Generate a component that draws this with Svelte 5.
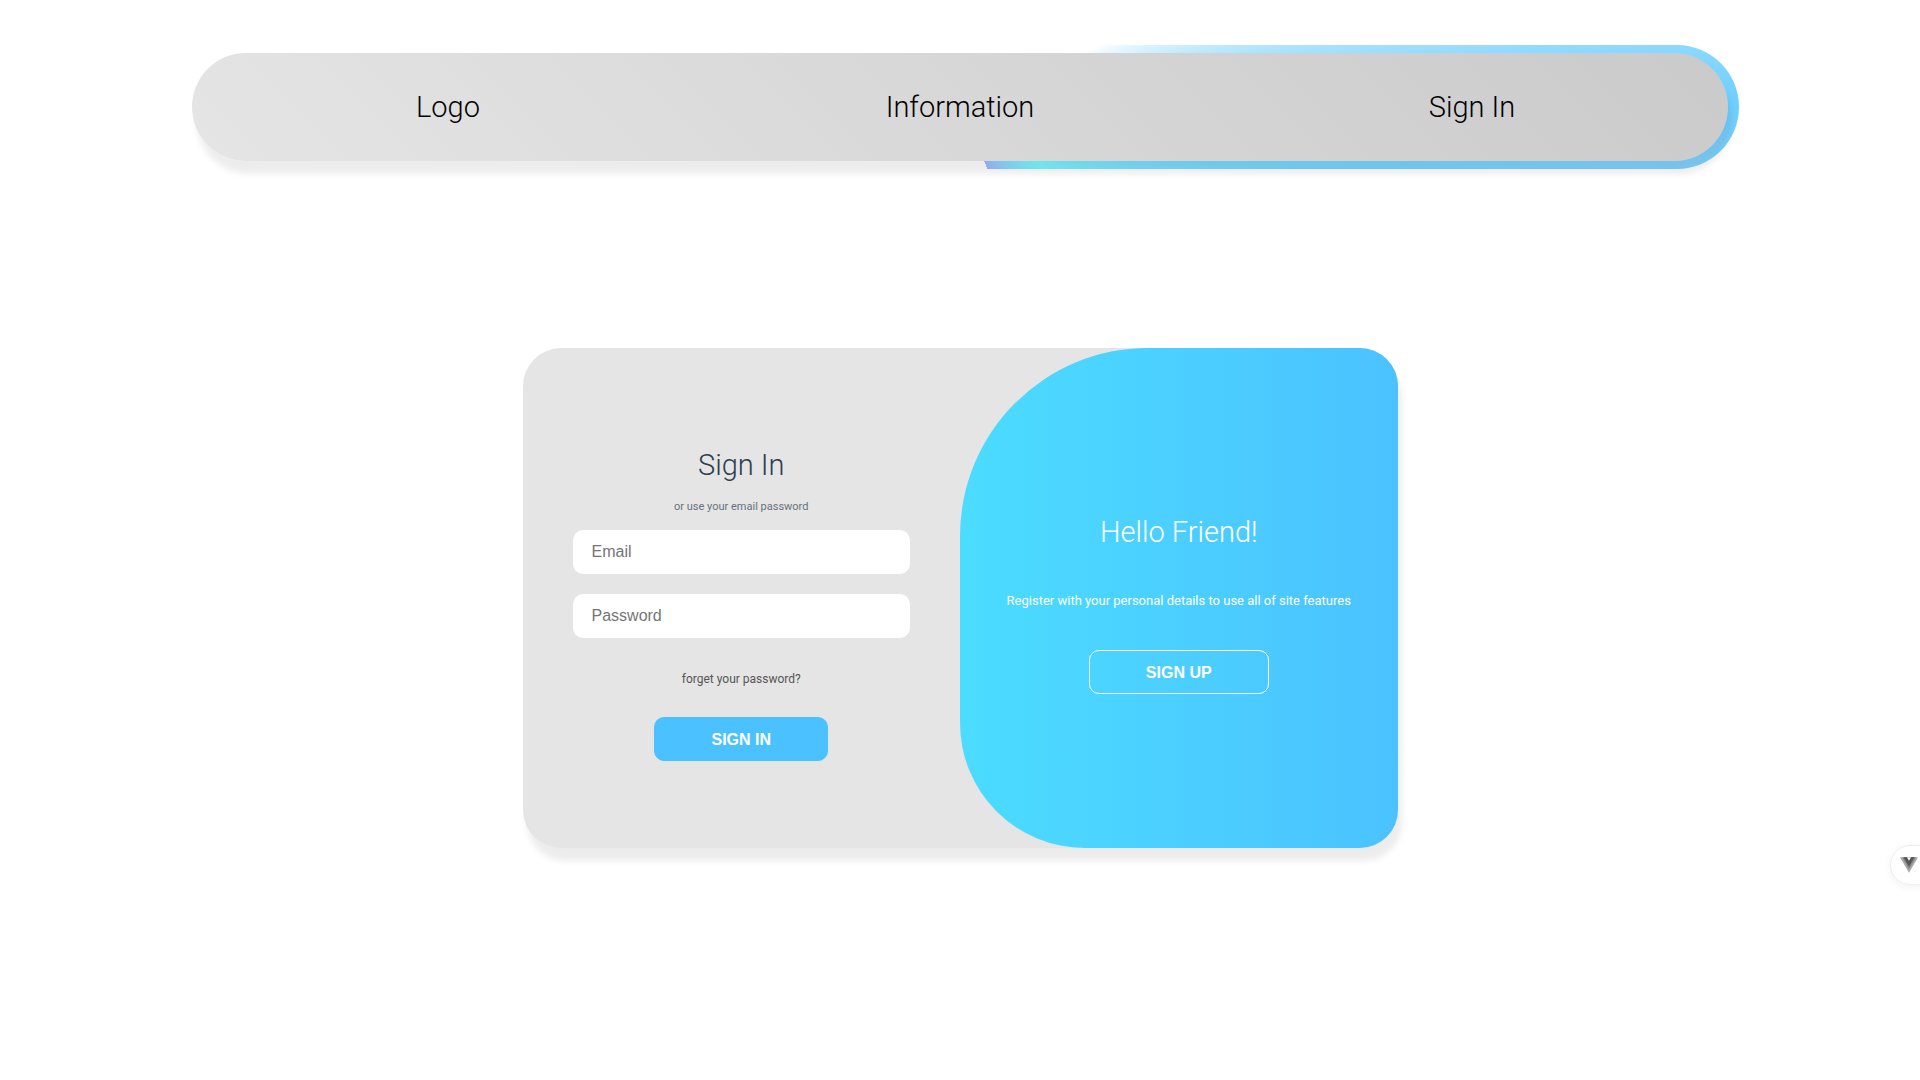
<script>
  let email = $state('');
  let password = $state('');
  const links = ['Logo', 'Information', 'Sign In'];
</script>

<div class="page">
  <header class="bar">
    <nav>
      {#each links as link}
        <a href="#top">{link}</a>
      {/each}
    </nav>
  </header>

  <main class="card">
    <form class="sign-in" onsubmit={(e) => e.preventDefault()}>
      <h1>Sign In</h1>
      <p class="hint">or use your email password</p>
      <input type="email" placeholder="Email" aria-label="Email" bind:value={email} />
      <input type="password" placeholder="Password" aria-label="Password" bind:value={password} />
      <a class="forgot" href="#forgot">forget your password?</a>
      <button class="solid" type="submit">SIGN IN</button>
    </form>
    <section class="welcome">
      <h1>Hello Friend!</h1>
      <p>Register with your personal details to use all of site features</p>
      <button class="outline" type="button">SIGN UP</button>
    </section>
  </main>

  <button class="devtools" type="button" aria-label="Toggle devtools">
    <svg viewBox="0 0 256 221" width="18" height="16" aria-hidden="true">
      <path fill="#a8a8a8" d="M0 0h256L128 220.8z" />
      <path fill="#858585" d="M30 0h196L128 172z" />
      <path fill="#555" d="M50.56 0h154.24L128 133.12z" />
      <path fill="#fff" d="M97.92 0h59.52L128 51.2z" />
    </svg>
  </button>
</div>

<style>
  :global(body) {
    margin: 0;
    background: #fff;
  }
  .page {
    min-height: 100vh;
    box-sizing: border-box;
    padding: 53px 20px;
    font-family: Roboto, 'Liberation Sans', sans-serif;
    overflow: hidden;
  }
  h1,
  p {
    margin: 0;
    font-weight: 400;
  }
  a {
    text-decoration: none;
  }
  .bar {
    position: relative;
    z-index: 0;
    box-sizing: border-box;
    width: 82%;
    max-width: 1536px;
    margin: 0 auto;
  }
  .bar::before {
    content: '';
    position: absolute;
    z-index: -1;
    inset: -8px -11px;
    border-radius: 62px;
    background: conic-gradient(
      transparent 66deg,
      #6ecfff 90deg,
      #80d3ff 94deg,
      #79d5ff 98deg,
      #7be0ff 108deg,
      #7bf8ff 126deg,
      #9cbaff 156deg,
      transparent 156deg
    );
  }
  nav {
    display: grid;
    grid-template-columns: repeat(3, 1fr);
    border-radius: 54px;
    background: linear-gradient(45deg, #e5e5e5, #cacaca);
    box-shadow: 4px 13px 6px rgba(0, 0, 0, 0.075);
  }
  nav a {
    color: #000;
    font-size: 29px;
    font-weight: 300;
    line-height: 108px;
    text-align: center;
  }
  .card {
    display: grid;
    grid-template-columns: 1fr 1fr;
    max-width: 875px;
    min-height: 500px;
    margin: 187px auto 0;
    border-radius: 38px;
    background: #e5e5e5;
    box-shadow: 4px 13px 6px rgba(0, 0, 0, 0.075);
  }
  .sign-in,
  .welcome {
    display: flex;
    flex-direction: column;
    align-items: center;
    justify-content: center;
  }
  .sign-in {
    padding: 0 50px;
    color: #2c3e50;
  }
  h1 {
    font-size: 29px;
    font-weight: 300;
    line-height: 60px;
  }
  .hint {
    margin-bottom: 11px;
    color: #66717d;
    font-size: 11px;
    line-height: 24px;
  }
  input {
    box-sizing: border-box;
    width: 100%;
    height: 44px;
    padding: 0 19px;
    border: 0;
    border-radius: 10px;
    outline: 0;
    background: #fff;
    font: 16px 'Liberation Sans', sans-serif;
  }
  input::placeholder {
    color: #757575;
  }
  input + input {
    margin-top: 20px;
  }
  .forgot {
    margin: 31px 0 28px;
    color: #555;
    font-size: 12px;
    line-height: 20px;
  }
  button {
    cursor: pointer;
  }
  .solid,
  .outline {
    box-sizing: border-box;
    height: 44px;
    padding: 2px 56px 0;
    border: 1px solid #fff;
    border-radius: 10px;
    color: #fff;
    font: bold 16px 'Liberation Sans', sans-serif;
  }
  .solid {
    background: #4bc2ff;
    border-color: #4bc2ff;
  }
  .outline {
    background: transparent;
  }
  .welcome {
    border-radius: 188px 38px 38px 125px;
    background: linear-gradient(to right, #4bdcff, #4bc2ff);
    color: #fff;
  }
  .welcome p {
    margin: 27px 0 37px;
    font-size: 13px;
    line-height: 24px;
    text-align: center;
  }
  .devtools {
    position: fixed;
    top: 845px;
    right: -20px;
    display: flex;
    align-items: center;
    box-sizing: border-box;
    width: 50px;
    height: 40px;
    padding: 0 9px;
    border: 1px solid #eee;
    border-radius: 20px;
    background: #fff;
    box-shadow: 0 2px 8px rgba(0, 0, 0, 0.05);
  }
  .devtools svg {
    flex: none;
  }
</style>
